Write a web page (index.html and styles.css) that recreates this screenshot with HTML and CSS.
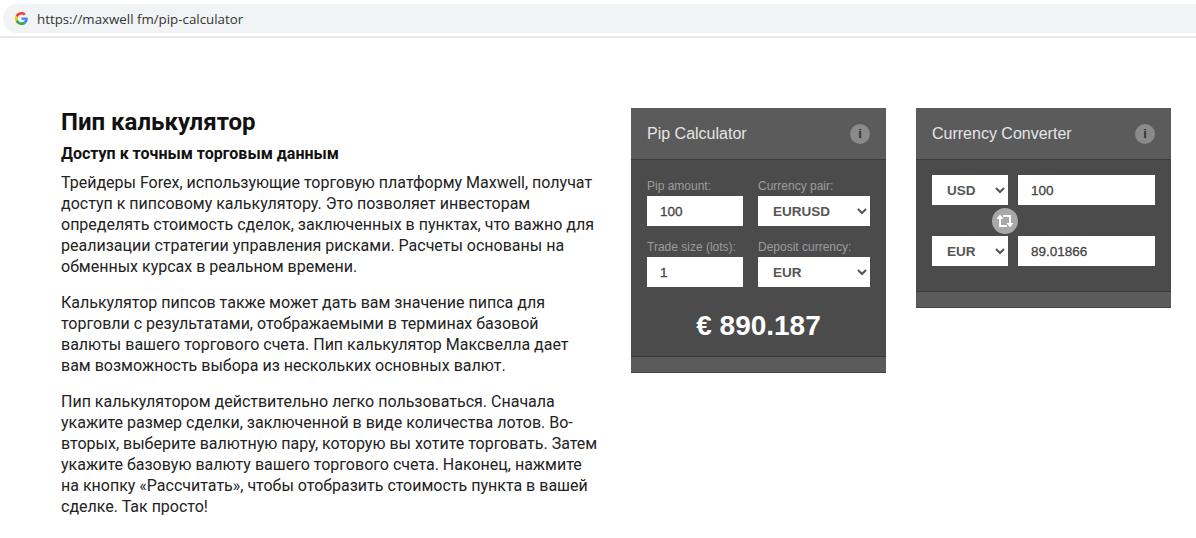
FILE: index.html
```html
<!DOCTYPE html>
<html lang="en">
<head>
    <meta charset="UTF-8">
    <meta name="viewport" content="width=device-width, initial-scale=1.0">
    <title>Pip Calculator</title>
    <link rel="stylesheet" href="styles.css">
</head>
<body>
    <div class="browser-bar">
        <div class="address">
            <svg class="g-logo" width="13" height="13" viewBox="0 0 48 48">
                <path fill="#ea4335" d="M24 9.500c3.500 0 6.700 1.300 9.100 3.500l6.800-6.800C35.800 2.400 30.300 0 24 0 14.600 0 6.500 5.400 2.600 13.200l7.900 6.100C12.400 13.600 17.700 9.500 24 9.500z"/>
                <path fill="#4285f4" d="M47 24.500c0-1.600-.2-3.200-.4-4.500H24v9h12.900c-.6 3-2.200 5.400-4.700 7.100l7.700 6c4.500-4.200 7.100-10.300 7.100-17.600z"/>
                <path fill="#fbbc05" d="M10.500 28.700c-.5-1.500-.8-3-.8-4.700s.3-3.200.8-4.700l-7.900-6.100C.9 16.500 0 20.100 0 24s.9 7.500 2.600 10.800l7.900-6.100z"/>
                <path fill="#34a853" d="M24 48c6.500 0 11.900-2.100 15.900-5.900l-7.700-6c-2.100 1.500-4.900 2.400-8.200 2.400-6.300 0-11.600-4.200-13.500-9.800l-7.900 6.100C6.500 42.600 14.600 48 24 48z"/>
            </svg>
            <span class="url">https://maxwell fm/pip-calculator</span>
        </div>
    </div>

    <div class="content">
        <div class="article">
            <h1>Пип калькулятор</h1>
            <h2>Доступ к точным торговым данным</h2>
            <p>Трейдеры Forex, использующие торговую платформу Maxwell, получат доступ к пипсовому калькулятору. Это позволяет инвесторам определять стоимость сделок, заключенных в пунктах, что важно для реализации стратегии управления рисками. Расчеты основаны на обменных курсах в реальном времени.</p>
            <p>Калькулятор пипсов также может дать вам значение пипса для торговли с результатами, отображаемыми в терминах базовой валюты вашего торгового счета. Пип калькулятор Максвелла дает вам возможность выбора из нескольких основных валют.</p>
            <p>Пип калькулятором действительно легко пользоваться. Сначала укажите размер сделки, заключенной в виде количества лотов. Во-вторых, выберите валютную пару, которую вы хотите торговать. Затем укажите базовую валюту вашего торгового счета. Наконец, нажмите на кнопку «Рассчитать», чтобы отобразить стоимость пункта в вашей сделке. Так просто!</p>
        </div>

        <div class="widget">
            <div class="widget-head">
                <span>Pip Calculator</span>
                <span class="info">i</span>
            </div>
            <div class="widget-body pip-body">
                <div class="pip-grid">
                    <label>Pip amount:<input type="text" value="100"></label>
                    <label>Currency pair:<select><option>EURUSD</option></select></label>
                    <label>Trade size (lots):<input type="text" value="1"></label>
                    <label>Deposit currency:<select><option>EUR</option></select></label>
                </div>
                <div class="result">€ 890.187</div>
            </div>
            <div class="widget-foot"></div>
        </div>

        <div class="widget">
            <div class="widget-head">
                <span>Currency Converter</span>
                <span class="info">i</span>
            </div>
            <div class="widget-body converter-body">
                <div class="conv-row">
                    <select><option>USD</option></select>
                    <input type="text" value="100">
                </div>
                <div class="conv-row">
                    <select><option>EUR</option></select>
                    <input type="text" value="89.01866">
                </div>
                <div class="swap">
                    <svg width="18" height="16" viewBox="0 0 18 16" fill="none" stroke="#fff" stroke-width="2">
                        <path d="M4 5v8h7"/>
                        <path d="M14 11V3H7"/>
                        <path d="M0.500 6L4 1.500 7.500 6z" fill="#fff" stroke="none"/>
                        <path d="M10.500 10L14 14.500 17.500 10z" fill="#fff" stroke="none"/>
                    </svg>
                </div>
            </div>
            <div class="widget-foot"></div>
        </div>
    </div>
</body>
</html>
```

FILE: styles.css
```css
body { margin: 0; background: #fff; font-family: Roboto, Arial, sans-serif; color: #111; }

.browser-bar { height: 38px; padding-top: 4px; box-sizing: border-box; border-bottom: 2px solid #e8e8e8; }
.address { height: 29px; margin-left: 3px; padding-left: 12px; background: #f1f3f4; border-radius: 15px 0 0 15px; display: flex; align-items: center; }
.g-logo { margin-right: 9px; }
.url { font-family: "Open Sans", sans-serif; font-size: 13.3px; color: #333; }

.content { display: flex; align-items: flex-start; padding: 70px 25px 0 61px; }
.article { width: 540px; margin-right: 30px; }
h1 { margin: 0; font-size: 24px; line-height: 28px; font-weight: 700; color: #111; }
h2 { margin: 7px 0 8px; font-size: 16px; line-height: 21px; font-weight: 700; color: #111; }
p { margin: 0 0 15px; font-size: 16px; line-height: 21px; color: #222; }

.widget { width: 255px; margin-right: 30px; flex: none; font-family: "Liberation Sans", Arial, sans-serif; background: #4b4b4b; }
.widget:last-child { margin-right: 0; }
.widget-head { height: 52px; padding: 0 16px; box-sizing: border-box; background: #5b5b5b; border-bottom: 1px solid #3d3d3d; display: flex; align-items: center; justify-content: space-between; color: #e6e6e6; font-size: 16px; }
.info { width: 20px; height: 20px; border-radius: 50%; background: #8a8a8a; color: #333; font-size: 13px; font-weight: 700; text-align: center; line-height: 20px; }
.widget-foot { height: 15px; background: #5b5b5b; border-top: 1px solid #3a3a3a; border-bottom: 1px solid #444; }

input, select { font-family: "Liberation Sans", Arial, sans-serif; font-size: 13.5px; color: #444; background: #fff; border: 0; border-radius: 0; height: 30px; box-sizing: border-box; outline: 0; margin: 0; }
input { padding: 0 13px; -webkit-text-stroke: 0.3px #444; }
select { padding: 0 0 0 11px; font-weight: 700; color: #555; }

.pip-body { padding: 18px 16px 0; height: 196px; box-sizing: border-box; }
.pip-grid { display: grid; grid-template-columns: 96px 112px; column-gap: 15px; row-gap: 13px; }
.pip-grid label { display: block; font-size: 12px; line-height: 17px; color: #9c9c9c; }
.pip-grid input, .pip-grid select { display: block; width: 100%; margin-top: 1px; }
.result { margin-top: 23px; text-align: center; font-size: 28px; line-height: 32px; font-weight: 700; color: #fff; }

.converter-body { position: relative; padding: 15px 16px 25px; display: flex; flex-direction: column; gap: 31px; }
.conv-row { display: flex; gap: 10px; }
.conv-row select { width: 76px; flex: none; }
.conv-row input { flex: 1; min-width: 0; }
.swap { position: absolute; left: 76px; top: 48px; width: 26px; height: 26px; border-radius: 50%; background: #a8a8a8; display: flex; align-items: center; justify-content: center; }
```
